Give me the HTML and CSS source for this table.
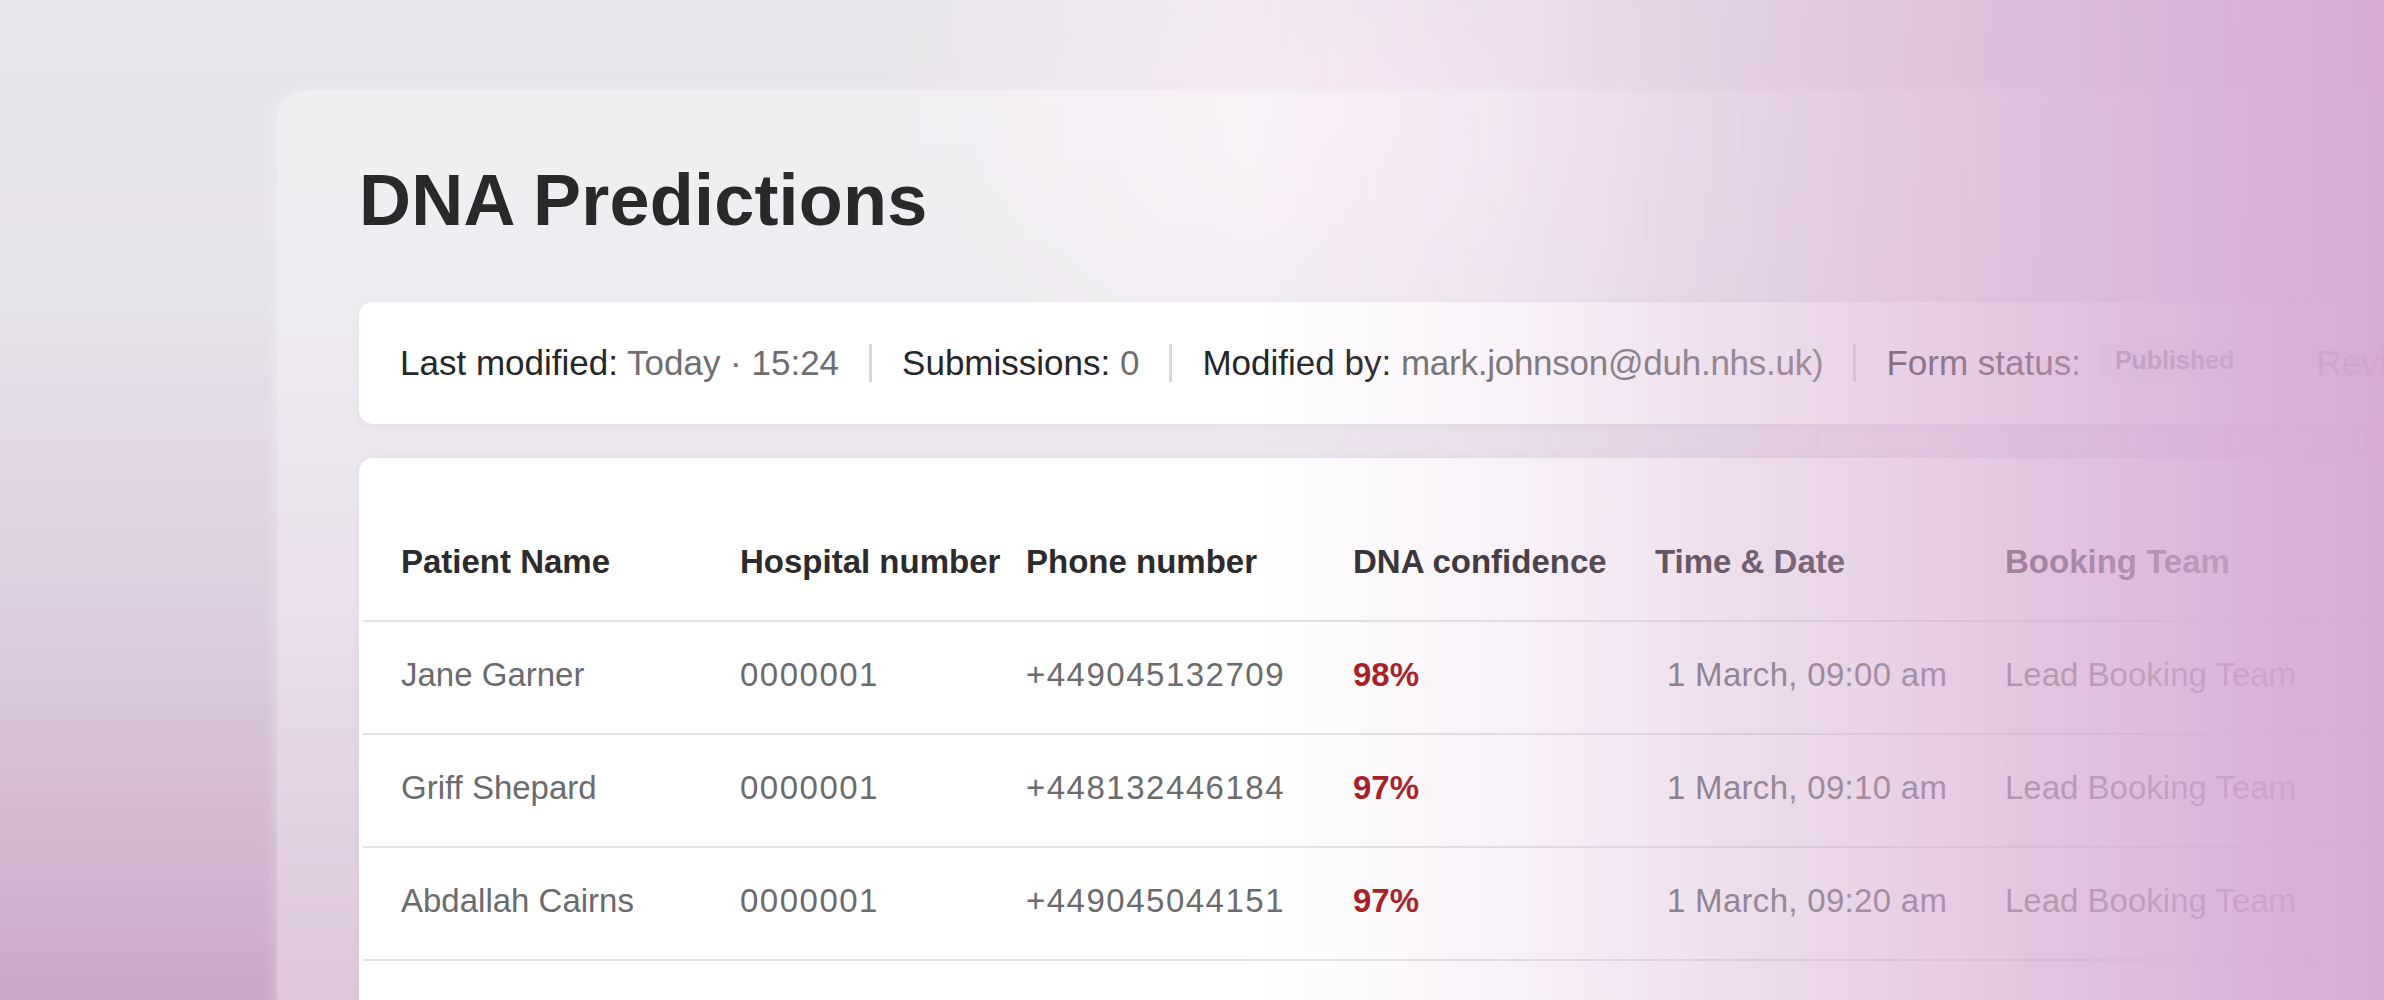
FILE: index.html
```html
<!DOCTYPE html>
<html lang="en">
<head>
<meta charset="utf-8">
<title>DNA Predictions</title>
<link rel="stylesheet" href="styles.css">
</head>
<body>
<div class="stage">
  <section class="panel">
    <h1 class="title">DNA Predictions</h1>

    <div class="meta">
      <span class="meta-item"><span class="label">Last modified:</span> <span class="value">Today · 15:24</span></span>
      <span class="sep"></span>
      <span class="meta-item"><span class="label">Submissions:</span> <span class="value">0</span></span>
      <span class="sep"></span>
      <span class="meta-item"><span class="label">Modified by:</span> <span class="value email">mark.johnson@duh.nhs.uk)</span></span>
      <span class="sep"></span>
      <span class="meta-item status"><span class="label">Form status:</span><span class="pill">Published</span></span>
      <span class="meta-item review"><span class="value">Review</span></span>
    </div>

    <div class="table">
      <div class="row head">
        <span class="cell">Patient Name</span>
        <span class="cell">Hospital number</span>
        <span class="cell">Phone number</span>
        <span class="cell">DNA confidence</span>
        <span class="cell">Time &amp; Date</span>
        <span class="cell">Booking Team</span>
      </div>
      <div class="row">
        <span class="cell">Jane Garner</span>
        <span class="cell num">0000001</span>
        <span class="cell num">+449045132709</span>
        <span class="cell conf">98%</span>
        <span class="cell time">1 March, 09:00 am</span>
        <span class="cell">Lead Booking Team</span>
      </div>
      <div class="row">
        <span class="cell">Griff Shepard</span>
        <span class="cell num">0000001</span>
        <span class="cell num">+448132446184</span>
        <span class="cell conf">97%</span>
        <span class="cell time">1 March, 09:10 am</span>
        <span class="cell">Lead Booking Team</span>
      </div>
      <div class="row">
        <span class="cell">Abdallah Cairns</span>
        <span class="cell num">0000001</span>
        <span class="cell num">+449045044151</span>
        <span class="cell conf">97%</span>
        <span class="cell time">1 March, 09:20 am</span>
        <span class="cell">Lead Booking Team</span>
      </div>
    </div>
  </section>
</div>
<div class="fade"></div>
</body>
</html>
```

FILE: styles.css
```css
html, body {
  margin: 0;
  padding: 0;
}

body {
  width: 2384px;
  height: 1000px;
  overflow: hidden;
  font-family: "Liberation Sans", Arial, sans-serif;
  background:
    radial-gradient(ellipse 700px 480px at 1380px 110px, rgba(250, 236, 246, 0.9), rgba(250, 236, 246, 0) 72%),
    linear-gradient(180deg, #e9e7eb 0%, #e6e2e9 30%, #dccedf 62%, #cba7c7 100%);
}

.stage {
  padding: 90px 0 0 277px;
}

.panel {
  background: rgba(255, 255, 255, 0.36);
  border-radius: 32px 0 0 0;
  padding: 74px 0 0 82px;
  height: 1200px;
  box-shadow: -4px 0 14px rgba(255, 255, 255, 0.25);
}

.title {
  margin: 0;
  font-size: 72px;
  line-height: 72px;
  font-weight: 700;
  color: #2a2829;
  letter-spacing: 0.2px;
}

.meta {
  margin-top: 66px;
  height: 122px;
  box-sizing: border-box;
  background: #ffffff;
  border-radius: 14px 0 0 14px;
  display: flex;
  align-items: center;
  gap: 30px;
  padding-left: 41px;
  font-size: 35px;
  white-space: nowrap;
  box-shadow: 0 2px 10px rgba(60, 40, 70, 0.05);
}

.label {
  color: #262628;
}

.value {
  color: #6e6e70;
}

.email {
  letter-spacing: -0.25px;
}

.sep {
  flex: 0 0 3px;
  width: 3px;
  height: 38px;
  background: #d6d6da;
}

.status {
  display: flex;
  align-items: center;
  gap: 18px;
}

.pill {
  font-size: 25px;
  font-weight: 700;
  color: #7a7a7d;
  background: #f6f6f7;
  border-radius: 8px;
  padding: 6px 16px;
  margin-top: -6px;
}

.review {
  margin-left: 36px;
}

.table {
  margin-top: 34px;
  background: #ffffff;
  border-radius: 14px 0 0 0;
  height: 700px;
  box-shadow: 0 0 10px rgba(60, 40, 70, 0.04);
}

.row {
  display: grid;
  grid-template-columns: 339px 286px 327px 302px 350px 1fr;
  align-items: center;
  box-sizing: border-box;
  height: 113px;
  margin-left: 4px;
  padding-left: 38px;
  padding-bottom: 6px;
  border-bottom: 2px solid #e3e3e5;
  font-size: 33px;
  color: #6b6b6e;
  white-space: nowrap;
}

.row.head {
  height: 164px;
  padding-top: 46px;
  padding-bottom: 0;
  font-weight: 700;
  color: #2b2b2d;
}

.num {
  letter-spacing: 1.5px;
}

.conf {
  font-weight: 700;
  color: #a5161a;
}

.time {
  padding-left: 12px;
  letter-spacing: 0.3px;
}

.fade {
  position: fixed;
  inset: 0;
  pointer-events: none;
  background: linear-gradient(90deg,
    rgba(213, 172, 210, 0) 0px,
    rgba(213, 172, 210, 0) 1250px,
    rgba(213, 172, 210, 0.15) 1500px,
    rgba(213, 172, 210, 0.36) 1700px,
    rgba(213, 172, 210, 0.66) 2000px,
    rgba(213, 172, 210, 0.9) 2250px,
    rgba(212, 170, 209, 0.97) 2384px);
}
```
